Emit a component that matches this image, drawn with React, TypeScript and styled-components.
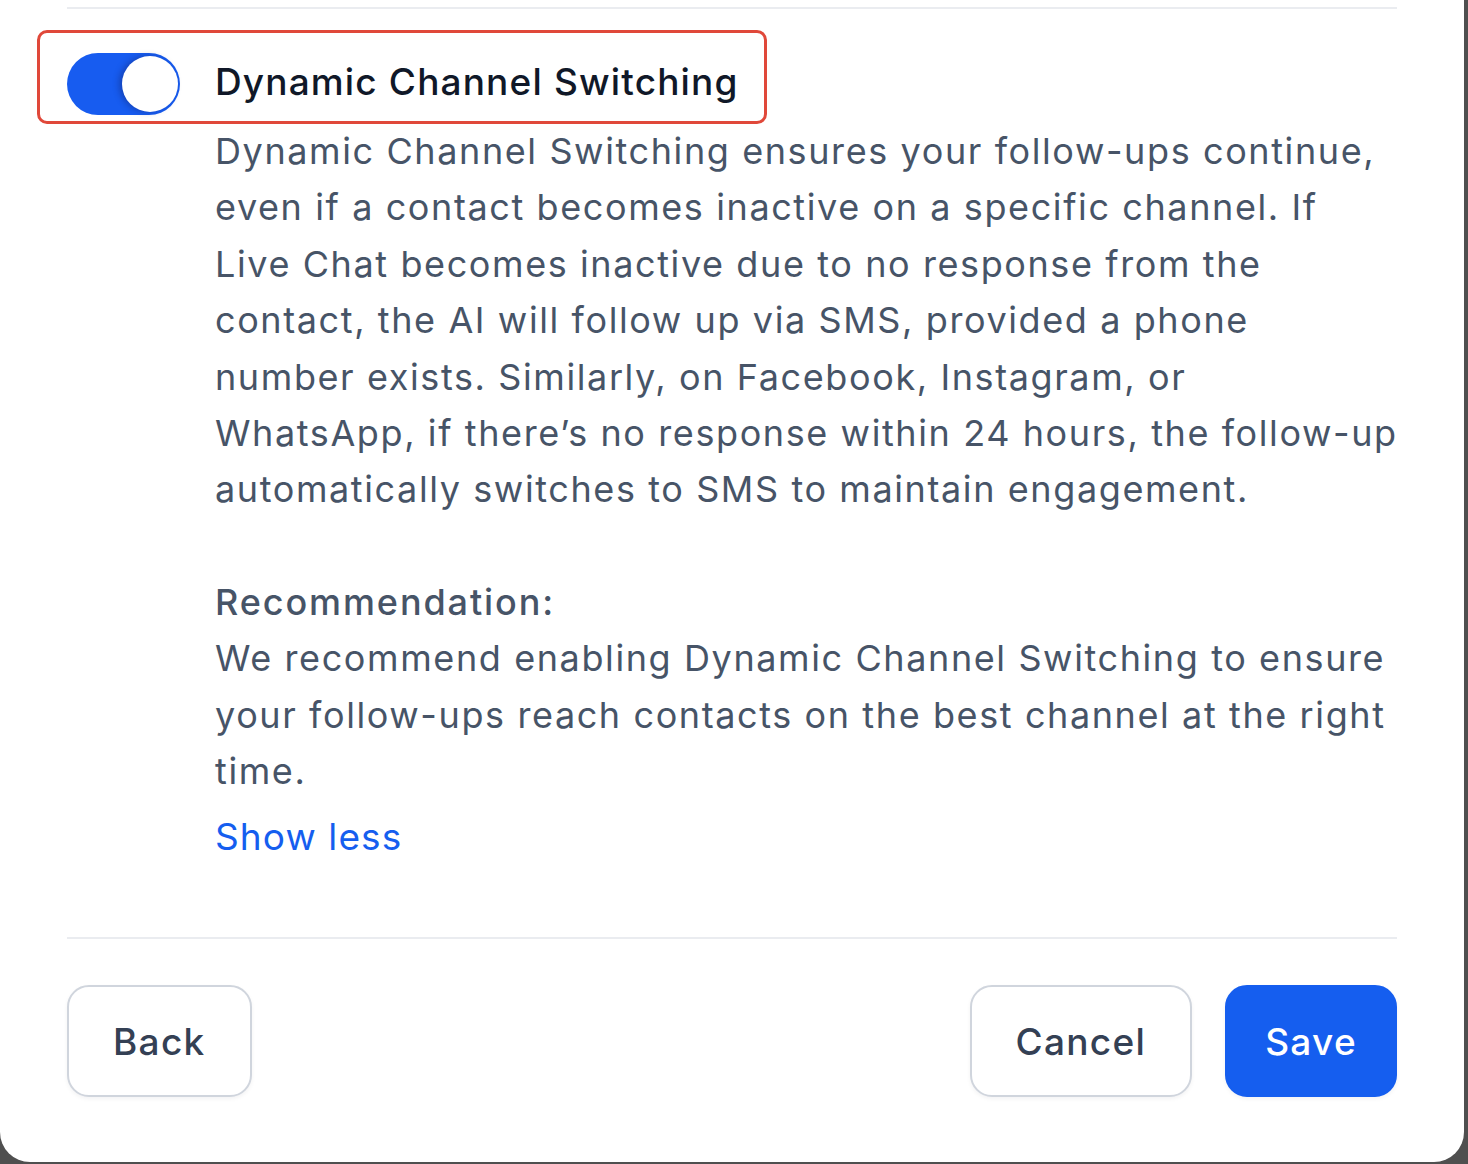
import React, { useState } from "react";
import styled, { createGlobalStyle } from "styled-components";

const Global = createGlobalStyle`
  html, body {
    margin: 0;
    padding: 0;
    background: #4f4f4f;
  }
  body {
    font-family: Inter, "Noto Sans", sans-serif;
    -webkit-font-smoothing: antialiased;
  }
`;

const Modal = styled.div`
  box-sizing: border-box;
  width: 1464px;
  height: 1162px;
  background: #ffffff;
  border-radius: 0 0 30px 30px;
  padding: 7px 67px 0 67px;
  display: flex;
  flex-direction: column;
`;

const Divider = styled.div<{ $top?: number }>`
  height: 2px;
  background: #eaecf0;
  margin-top: ${(p) => p.$top ?? 0}px;
  flex-shrink: 0;
`;

const Row = styled.div`
  position: relative;
  display: flex;
  align-items: center;
  gap: 35px;
  margin-top: 44px;
`;

const Highlight = styled.div`
  position: absolute;
  left: -30px;
  top: -23px;
  width: 730px;
  height: 94px;
  box-sizing: border-box;
  border: 3px solid #e0483a;
  border-radius: 10px;
  pointer-events: none;
`;

const Track = styled.button<{ $on: boolean }>`
  position: relative;
  width: 113px;
  height: 62px;
  border: none;
  padding: 0;
  border-radius: 31px;
  background: ${(p) => (p.$on ? "#175cf0" : "#eaecf0")};
  cursor: pointer;
  flex-shrink: 0;
`;

const Knob = styled.span<{ $on: boolean }>`
  position: absolute;
  top: 3px;
  left: ${(p) => (p.$on ? "55px" : "3px")};
  width: 56px;
  height: 56px;
  border-radius: 50%;
  background: #ffffff;
  box-shadow: -3px 0 6px rgba(16, 24, 80, 0.35);
`;

const Title = styled.span`
  font-size: 37px;
  font-weight: 500;
  color: #101828;
  letter-spacing: 1.15px;
  padding-bottom: 5px;
`;

const Body = styled.div`
  margin-left: 148px;
  margin-right: -14px;
  margin-top: 8px;
  font-size: 36px;
  line-height: 56.4px;
  color: #475467;
  letter-spacing: 1.6px;
`;

const Para = styled.p`
  margin: 0;
`;

const Strong = styled.p`
  margin: 56px 0 0 0;
  font-weight: 500;
  letter-spacing: 1.9px;
`;

const LinkButton = styled.button`
  display: block;
  margin-top: 10px;
  padding: 0;
  border: none;
  background: none;
  font-family: inherit;
  font-size: 37px;
  line-height: 56px;
  letter-spacing: 1.1px;
  color: #155eef;
  cursor: pointer;
`;

const Footer = styled.div`
  display: flex;
  align-items: center;
  margin-top: 46px;
  gap: 33px;
`;

const Spacer = styled.div`
  flex: 1;
`;

const Btn = styled.button<{ $primary?: boolean }>`
  height: 112px;
  box-sizing: border-box;
  padding: 0 ${(p) => (p.$primary ? 38 : 44)}px;
  border-radius: 22px;
  font-family: inherit;
  font-size: 37px;
  font-weight: 500;
  letter-spacing: 1.3px;
  cursor: pointer;
  border: 2px solid ${(p) => (p.$primary ? "#155eef" : "#d0d5dd")};
  background: ${(p) => (p.$primary ? "#155eef" : "#ffffff")};
  color: ${(p) => (p.$primary ? "#ffffff" : "#344054")};
  box-shadow: 0 2px 4px rgba(16, 24, 40, 0.05);
`;

export default function App() {
  const [on, setOn] = useState(true);
  return (
    <>
      <Global />
      <Modal>
        <Divider />
        <Row>
          <Highlight />
          <Track $on={on} onClick={() => setOn(!on)} aria-label="toggle">
            <Knob $on={on} />
          </Track>
          <Title>Dynamic Channel Switching</Title>
        </Row>
        <Body>
          <Para>
            Dynamic Channel Switching ensures your follow-ups continue,
            <br />
            even if a contact becomes inactive on a specific channel. If
            <br />
            Live Chat becomes inactive due to no response from the
            <br />
            contact, the AI will follow up via SMS, provided a phone
            <br />
            number exists. Similarly, on Facebook, Instagram, or
            <br />
            WhatsApp, if there’s no response within 24 hours, the follow-up
            <br />
            automatically switches to SMS to maintain engagement.
          </Para>
          <Strong>Recommendation:</Strong>
          <Para>
            We recommend enabling Dynamic Channel Switching to ensure
            <br />
            your follow-ups reach contacts on the best channel at the right
            <br />
            time.
          </Para>
          <LinkButton>Show less</LinkButton>
        </Body>
        <Divider $top={72} />
        <Footer>
          <Btn>Back</Btn>
          <Spacer />
          <Btn>Cancel</Btn>
          <Btn $primary>Save</Btn>
        </Footer>
      </Modal>
    </>
  );
}
